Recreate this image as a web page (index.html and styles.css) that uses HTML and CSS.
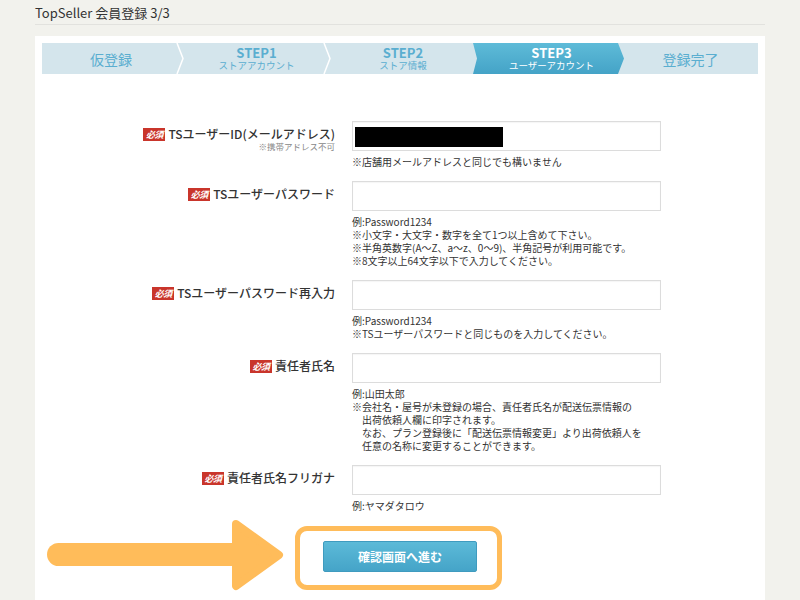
FILE: index.html
```html
<!DOCTYPE html>
<html lang="ja">
<head>
<meta charset="utf-8">
<title>TopSeller 会員登録 3/3</title>
<link rel="stylesheet" href="styles.css">
</head>
<body>
<div class="page">
  <h1 class="page-title">TopSeller 会員登録 3/3</h1>
  <div class="panel">
    <div class="steps">
      <div class="step step-a"><span class="step-main big">仮登録</span><svg class="sep" viewBox="0 0 8 31" width="8" height="31"><polyline points="1,0 7,15.5 1,31" fill="none" stroke="#fff" stroke-width="1.5"/></svg></div>
      <div class="step step-b"><span class="step-main">STEP1</span><span class="step-sub">ストアアカウント</span><svg class="sep" viewBox="0 0 8 31" width="8" height="31"><polyline points="1,0 7,15.5 1,31" fill="none" stroke="#fff" stroke-width="1.5"/></svg></div>
      <div class="step step-c"><span class="step-main">STEP2</span><span class="step-sub">ストア情報</span></div>
      <div class="step step-d active"><span class="step-main">STEP3</span><span class="step-sub">ユーザーアカウント</span></div>
      <div class="step step-e"><span class="step-main big">登録完了</span></div>
    </div>

    <form class="form">
      <div class="label">
        <div class="label-line"><span class="req">必須</span><span>TSユーザーID(メールアドレス)</span></div>
        <div class="sublabel">※携帯アドレス不可</div>
      </div>
      <div class="field">
        <div class="input"><span class="redact"></span></div>
        <div class="notes"><div>※店舗用メールアドレスと同じでも構いません</div></div>
      </div>

      <div class="label">
        <div class="label-line"><span class="req">必須</span><span>TSユーザーパスワード</span></div>
      </div>
      <div class="field">
        <div class="input"></div>
        <div class="notes">
          <div>例:Password1234</div>
          <div>※小文字・大文字・数字を全て1つ以上含めて下さい。</div>
          <div>※半角英数字(A〜Z、a〜z、0〜9)、半角記号が利用可能です。</div>
          <div>※8文字以上64文字以下で入力してください。</div>
        </div>
      </div>

      <div class="label">
        <div class="label-line"><span class="req">必須</span><span>TSユーザーパスワード再入力</span></div>
      </div>
      <div class="field">
        <div class="input"></div>
        <div class="notes">
          <div>例:Password1234</div>
          <div>※TSユーザーパスワードと同じものを入力してください。</div>
        </div>
      </div>

      <div class="label">
        <div class="label-line"><span class="req">必須</span><span>責任者氏名</span></div>
      </div>
      <div class="field">
        <div class="input"></div>
        <div class="notes">
          <div>例:山田太郎</div>
          <div class="hang">※会社名・屋号が未登録の場合、責任者氏名が配送伝票情報の<br>出荷依頼人欄に印字されます。<br>なお、プラン登録後に「配送伝票情報変更」より出荷依頼人を<br>任意の名称に変更することができます。</div>
        </div>
      </div>

      <div class="label">
        <div class="label-line"><span class="req">必須</span><span>責任者氏名フリガナ</span></div>
      </div>
      <div class="field">
        <div class="input"></div>
        <div class="notes"><div>例:ヤマダタロウ</div></div>
      </div>
    </form>

    <div class="actions">
      <svg class="arrow" viewBox="0 0 245 72" width="245" height="72">
        <rect x="0" y="24" width="200" height="23" rx="11.5" fill="#ffbc5a"/>
        <polygon points="189,5 232,36 189,67" fill="#ffbc5a" stroke="#ffbc5a" stroke-width="8" stroke-linejoin="round"/>
      </svg>
      <div class="highlight"></div>
      <button class="submit" type="button">確認画面へ進む</button>
    </div>
  </div>
</div>
</body>
</html>
```
FILE: styles.css
```css
* { box-sizing: border-box; }
html, body { margin: 0; padding: 0; }
body {
  background: #f2f2ed;
  font-family: "Noto Sans CJK JP", "Noto Sans", sans-serif;
  color: #333;
  height: 600px;
  overflow: hidden;
}
.page { padding: 0 35px; }
.page-title {
  margin: 0;
  padding: 5px 0 3px;
  font-size: 13px;
  line-height: 16px;
  font-weight: normal;
  color: #333;
  border-bottom: 1px solid #e2e2de;
}
.panel {
  margin-top: 11px;
  background: #fff;
  padding: 7px;
  min-height: 600px;
}
.steps {
  display: flex;
  height: 31px;
  background: #d4e5ec;
}
.step {
  position: relative;
  display: flex;
  flex-direction: column;
  align-items: center;
  justify-content: center;
  color: #5aaed0;
  padding-left: 6px;
}
.step-a { width: 138px; padding-left: 0; }
.step-b { width: 147px; }
.step-c { width: 146px; }
.step-d { width: 151px; margin-right: -2px; }
.step-e { width: 133px; padding-left: 4px; }
.step-main {
  font-size: 13px;
  font-weight: bold;
  line-height: 14px;
}
.step-main.big { font-size: 14px; font-weight: normal; line-height: 16px; }
.step-sub {
  font-size: 9.5px;
  line-height: 11px;
}
.sep {
  position: absolute;
  right: -4px;
  top: 0;
}
.active {
  color: #fff;
  background: linear-gradient(#5ebbd8, #44a3c7);
  clip-path: polygon(0 0, calc(100% - 6px) 0, 100% 50%, calc(100% - 6px) 100%, 0 100%, 4px 50%);
  z-index: 1;
}

.form {
  display: grid;
  grid-template-columns: 293px 309px;
  column-gap: 17px;
  row-gap: 13px;
  margin-top: 47px;
}
.label {
  padding-top: 6px;
  text-align: right;
}
.label-line {
  display: flex;
  justify-content: flex-end;
  align-items: center;
  gap: 3px;
  font-size: 12px;
  line-height: 14px;
  font-weight: 500;
  color: #333;
}
.req {
  display: inline-block;
  width: 22px;
  height: 13px;
  line-height: 13px;
  background: #c9352b;
  color: #fff;
  font-size: 9px;
  font-weight: bold;
  font-style: italic;
  text-align: center;
  letter-spacing: -0.5px;
}
.sublabel {
  font-size: 8.5px;
  line-height: 10px;
  color: #888;
}
.input {
  height: 30px;
  border: 1px solid #dcdcdc;
  background: #fff;
  box-shadow: inset 0 1px 1px rgba(0,0,0,0.04);
  padding: 5px 2px;
}
.redact {
  display: block;
  width: 148px;
  height: 20px;
  background: #000;
}
.notes {
  margin-top: 4px;
  font-size: 10px;
  line-height: 13px;
  color: #333;
}
.hang {
  padding-left: 1em;
  text-indent: -1em;
}

.actions {
  position: relative;
  margin-top: 29px;
  display: flex;
  justify-content: center;
}
.submit {
  width: 154px;
  height: 31px;
  border: 1px solid #3f9bbf;
  border-radius: 2px;
  background: linear-gradient(#5cbad8, #45a4c8);
  color: #fff;
  font-family: "Noto Sans CJK JP", "Noto Sans", sans-serif;
  font-size: 12px;
  font-weight: bold;
  padding: 0;
  position: relative;
  z-index: 1;
}
.highlight {
  position: absolute;
  left: 253px;
  top: -15px;
  width: 207px;
  height: 64px;
  border: 5px solid #ffbc5a;
  border-radius: 12px;
}
.arrow {
  position: absolute;
  left: 5px;
  top: -22px;
}
```
